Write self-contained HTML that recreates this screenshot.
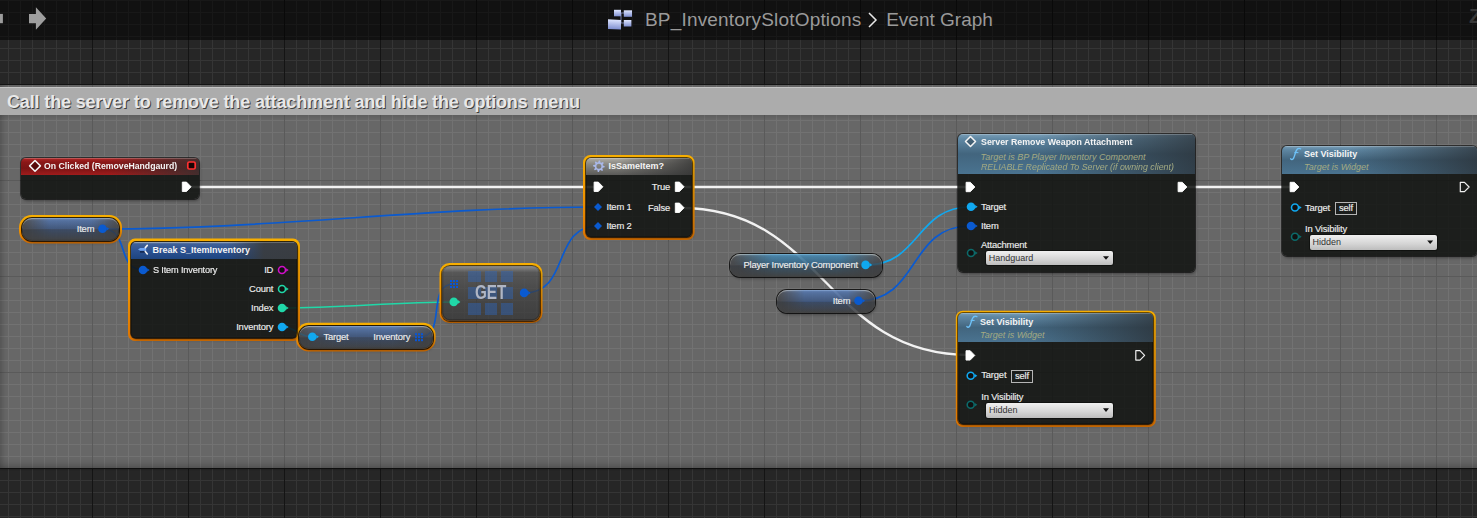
<!DOCTYPE html>
<html><head><meta charset="utf-8"><style>
*{margin:0;padding:0;box-sizing:border-box}
html,body{width:1477px;height:518px;overflow:hidden;background:#262626;font-family:"Liberation Sans",sans-serif}
div,span,svg{position:absolute}
#grid{left:0;top:0;width:1477px;height:518px;
background-image:
linear-gradient(to right,#141414 1px,transparent 1px),
linear-gradient(to bottom,#141414 1px,transparent 1px),
linear-gradient(to right,#353535 1px,transparent 1px),
linear-gradient(to bottom,#353535 1px,transparent 1px);
background-size:96px 518px,1477px 96px,12px 518px,1477px 12px;
background-position:92px 0,0 84px,8px 0,0 0;}
#topbar{left:0;top:0;width:1477px;height:40px;background:rgba(0,0,0,0.55)}
#cbody{left:-1px;top:85px;width:1520px;height:383px;background:rgba(255,255,255,0.3);box-shadow:0 1px 2px rgba(0,0,0,.4),inset 6px 0 6px -3px rgba(0,0,0,.22),inset 0 -8px 8px -6px rgba(0,0,0,.25)}
#cshade{left:0;top:114px;width:1477px;height:6px;background:linear-gradient(to bottom,rgba(0,0,0,.12),rgba(0,0,0,0))}
#chead{left:-20px;top:87.3px;width:1520px;height:27.5px;background:#acacac;box-shadow:inset 0 1px 0 rgba(255,255,255,.3)}
#ctext{left:7px;top:92px;font-size:18px;font-weight:bold;color:#e8e8e8;text-shadow:1px 1px 0 rgba(35,35,35,.8);white-space:nowrap;letter-spacing:-0.14px;line-height:21px}
.title{top:9px;font-size:19px;color:#9a9a9a;white-space:nowrap;line-height:22px}
.t{white-space:nowrap;font-size:9.4px;color:#ededed;line-height:12px;-webkit-text-stroke:0.15px currentColor;letter-spacing:-0.17px}
.b{-webkit-text-stroke:0;font-size:9px;letter-spacing:0}
.b{font-weight:bold;color:#f4f4f4}
.i{font-style:italic;color:#a3aa82;font-size:9px;letter-spacing:0;-webkit-text-stroke:0}
.node{border-radius:5px;background:rgba(17,20,17,0.87);box-shadow:0 0 0 1px rgba(0,0,0,.55),1px 2px 3px rgba(0,0,0,.35);overflow:hidden}
.hdr{left:0;top:0;right:0}
.hdr+.hdr{box-shadow:inset 0 1px 0 rgba(255,255,255,.22)}
.pill{border-radius:11px;box-shadow:inset 0 1px 0 rgba(255,255,245,.38),0 0 0 1px rgba(0,0,0,.75),1px 2px 3px rgba(0,0,0,.3);overflow:hidden;
background:linear-gradient(to bottom,rgba(120,122,126,.85) 0,rgba(74,76,80,.8) 12%,rgba(62,64,68,.8) 49%,rgba(52,56,62,.82) 51%,rgba(60,60,60,.86) 100%)}
.pb{left:0;right:0;top:0;height:50%;background:linear-gradient(to bottom,rgba(95,145,225,.6),rgba(60,105,180,.45));-webkit-mask-image:linear-gradient(to right,transparent 2%,#000 28%,#000 72%,transparent 98%)}
.pb2{left:0;right:0;top:50%;height:50%;background:linear-gradient(to bottom,rgba(55,95,160,.35),rgba(55,95,160,0));-webkit-mask-image:linear-gradient(to right,transparent 5%,#000 30%,#000 70%,transparent 95%)}
.drop{border-radius:2px;background:linear-gradient(to bottom,#f0f0f0,#d4d4d4 60%,#bdbdbd);box-shadow:0 0 0 1px rgba(0,0,0,.4)}
.self{border:1px solid #b5b5b5}
</style></head><body>
<div id="grid"></div>
<div id="topbar"></div>
<div id="cbody"></div><div id="cshade"></div><div id="chead"></div>
<div id="ctext">Call the server to remove the attachment and hide the options menu</div>
<svg style="left:0;top:0" width="60" height="40"><path d="M0 13.9H2.9V23.2H0Z" fill="#9c9c9c"/><path d="M29 13.9H35.9V7.3L46.2 18.5L35.9 29.7V23.2H29Z" fill="#9e9e9e"/></svg>
<svg style="left:604px;top:6px" width="32" height="26"><defs><linearGradient id="bp" x1="0" y1="0" x2="0" y2="1"><stop offset="0" stop-color="#dfe6ff"/><stop offset="1" stop-color="#7f8fd0"/></linearGradient></defs><path d="M13.5 7H20M17 7V17M13.5 17H20" stroke="#8a96c8" stroke-width="0.8" fill="none"/><rect x="10" y="3.8" width="7" height="6.5" fill="url(#bp)"/><rect x="19.8" y="4.3" width="8.2" height="6.5" fill="url(#bp)"/><rect x="4" y="13" width="13" height="9.7" fill="url(#bp)" transform="skewY(3)"/><rect x="19.8" y="14" width="7.6" height="6.5" fill="url(#bp)"/></svg>
<span class="title" style="left:645px;letter-spacing:.18px">BP_InventorySlotOptions</span>
<svg style="left:866px;top:10px" width="14" height="20"><path d="M3 3L10 10L3 17" fill="none" stroke="#e8e8e8" stroke-width="1.5"/></svg>
<span class="title" style="left:886.2px">Event Graph</span>
<span style="left:1469px;top:4px;font-size:21px;font-weight:bold;color:#383838;line-height:24px">Z</span>
<svg style="left:0;top:0" width="1477" height="518"><path d="M187 187 C324.0 187 461.0 187 598 187" fill="none" stroke="#f2f2f2" stroke-width="2.4"/><path d="M680 187 C776.6666666666666 187 873.3333333333334 187 970 187" fill="none" stroke="#f2f2f2" stroke-width="2.4"/><path d="M1182 187 C1219.3333333333333 187 1256.6666666666667 187 1294 187" fill="none" stroke="#f2f2f2" stroke-width="2.4"/><path d="M680 208 C825.6666666666666 208 824.3333333333334 355 970 355" fill="none" stroke="#f2f2f2" stroke-width="2.4"/><path d="M103 229 C275.33333333333337 229 425.66666666666663 207 598 207" fill="none" stroke="#0a5ad0" stroke-width="1.7"/><path d="M103 229 C130.0 229 116.0 270 143 270" fill="none" stroke="#0a5ad0" stroke-width="1.7"/><path d="M283 308 C342.0 308 395.0 302 454 302" fill="none" stroke="#20d8a8" stroke-width="1.7"/><path d="M283 327 C296.0 327 299.0 337 312 337" fill="none" stroke="#10a8f0" stroke-width="1.7"/><path d="M419 337 C448.3333333333333 337 424.6666666666667 284 454 284" fill="none" stroke="#0a5ad0" stroke-width="1.7"/><path d="M524 293 C571.0 293 551.0 226 598 226" fill="none" stroke="#0a5ad0" stroke-width="1.7"/><path d="M866 265 C920.0 265 916.0 207 970 207" fill="none" stroke="#10a8f0" stroke-width="1.7"/><path d="M858 301 C920.3333333333334 301 907.6666666666666 226 970 226" fill="none" stroke="#0a5ad0" stroke-width="1.7"/></svg>
<svg style="left:0;top:0" width="1477" height="518"><defs><linearGradient id="og" x1="0" y1="0" x2="0" y2="1"><stop offset="0" stop-color="#f7ae00"/><stop offset=".5" stop-color="#f09400"/><stop offset="1" stop-color="#df7400"/></linearGradient></defs><rect x="20.4" y="216.4" width="100.2" height="25.7" rx="11.1" fill="none" stroke="url(#og)" stroke-width="2.8"/><rect x="22.3" y="218.3" width="96.4" height="21.9" rx="9.7" fill="none" stroke="rgba(20,10,0,.7)" stroke-width="1"/><rect x="129.4" y="240.0" width="169.2" height="99.60000000000001" rx="5.6" fill="none" stroke="url(#og)" stroke-width="2.8"/><rect x="131.3" y="241.9" width="165.4" height="95.80000000000001" rx="4.2" fill="none" stroke="rgba(20,10,0,.7)" stroke-width="1"/><rect x="297.4" y="324.2" width="136.8" height="25.899999999999988" rx="11.1" fill="none" stroke="url(#og)" stroke-width="2.8"/><rect x="299.3" y="326.1" width="133.00000000000003" height="22.099999999999987" rx="9.7" fill="none" stroke="rgba(20,10,0,.7)" stroke-width="1"/><rect x="440.9" y="264.4" width="100.2" height="57.2" rx="8.6" fill="none" stroke="url(#og)" stroke-width="2.8"/><rect x="442.8" y="266.3" width="96.4" height="53.4" rx="7.2" fill="none" stroke="rgba(20,10,0,.7)" stroke-width="1"/><rect x="584.4" y="156.4" width="108.80000000000003" height="82.2" rx="6.1" fill="none" stroke="url(#og)" stroke-width="2.8"/><rect x="586.3" y="158.3" width="105.00000000000003" height="78.4" rx="4.7" fill="none" stroke="rgba(20,10,0,.7)" stroke-width="1"/><rect x="957.1999999999999" y="312.2" width="197.2" height="113.39999999999999" rx="5.6" fill="none" stroke="url(#og)" stroke-width="2.8"/><rect x="959.0999999999999" y="314.1" width="193.4" height="109.6" rx="4.2" fill="none" stroke="rgba(20,10,0,.7)" stroke-width="1"/></svg>
<div class="node" style="left:21px;top:158px;width:178px;height:41px;border-radius:5px;"><div class="hdr" style="height:17px;background:linear-gradient(to bottom,#b02424 0,#8a1818 25%,#7a1414 60%,#a01c1c 100%)"></div><div class="hdr" style="height:17px;background:linear-gradient(to right,rgba(52,48,48,0) 50%,rgba(52,48,48,.85) 100%)"></div></div>
<div class="pill" style="left:21.6px;top:217.6px;width:97.80000000000001px;height:23.30000000000001px;border-radius:10px;"><div class="pb"></div><div class="pb2"></div></div>
<div class="node" style="left:131px;top:241.8px;width:166px;height:96.39999999999998px;border-radius:5px;"><div class="hdr" style="height:17.5px;background:linear-gradient(to bottom,#7d8fa8 0,#3f6098 12%,#2a5090 55%,#1e4580 100%)"></div><div class="hdr" style="height:17.5px;background:linear-gradient(to right,rgba(58,60,62,0) 58%,rgba(58,60,62,.92) 80%,rgba(58,60,62,.95) 100%)"></div></div>
<div class="pill" style="left:298.6px;top:325.6px;width:134.29999999999995px;height:23.299999999999955px;border-radius:10px;"><div class="pb"></div><div class="pb2"></div></div>
<div class="node" style="left:442px;top:265.5px;width:98px;height:55px;border-radius:8px;background:linear-gradient(to bottom,rgba(150,150,150,.85) 0,rgba(80,80,80,.72) 12%,rgba(58,58,58,.7) 50%,rgba(50,50,50,.76) 100%)"></div>
<div style="left:468.4px;top:270.8px;width:12.2px;height:11.5px;background:rgba(45,105,195,.42);filter:blur(.6px)"></div>
<div style="left:468.4px;top:287px;width:12.2px;height:11.5px;background:rgba(45,105,195,.42);filter:blur(.6px)"></div>
<div style="left:468.4px;top:303.3px;width:12.2px;height:11.5px;background:rgba(45,105,195,.42);filter:blur(.6px)"></div>
<div style="left:484.6px;top:270.8px;width:12.2px;height:11.5px;background:rgba(45,105,195,.42);filter:blur(.6px)"></div>
<div style="left:484.6px;top:287px;width:12.2px;height:11.5px;background:rgba(45,105,195,.42);filter:blur(.6px)"></div>
<div style="left:484.6px;top:303.3px;width:12.2px;height:11.5px;background:rgba(45,105,195,.42);filter:blur(.6px)"></div>
<div style="left:500.9px;top:270.8px;width:12.2px;height:11.5px;background:rgba(45,105,195,.42);filter:blur(.6px)"></div>
<div style="left:500.9px;top:287px;width:12.2px;height:11.5px;background:rgba(45,105,195,.42);filter:blur(.6px)"></div>
<div style="left:500.9px;top:303.3px;width:12.2px;height:11.5px;background:rgba(45,105,195,.42);filter:blur(.6px)"></div>
<div class="node" style="left:585.8px;top:157.8px;width:106.0px;height:79.39999999999998px;border-radius:5px;"><div class="hdr" style="height:17.2px;background:linear-gradient(to bottom,#b0aea6 0,#8a8882 35%,#5a5a58 100%)"></div><div class="hdr" style="height:17.2px;background:linear-gradient(to right,rgba(48,48,48,0) 30%,rgba(48,48,48,.8) 100%)"></div></div>
<div class="pill" style="left:729.6px;top:254px;width:152.89999999999998px;height:22.80000000000001px;border-radius:10px;"><div class="pb" style="background:linear-gradient(to bottom,rgba(70,170,230,.6),rgba(40,130,190,.45))"></div><div class="pb2" style="background:linear-gradient(to bottom,rgba(40,120,170,.35),rgba(40,120,170,0))"></div></div>
<div class="pill" style="left:777.4px;top:290px;width:97.80000000000007px;height:23px;border-radius:10px;"><div class="pb"></div><div class="pb2"></div></div>
<div class="node" style="left:957.5px;top:134px;width:237.0px;height:138.3px;border-radius:5px;"><div class="hdr" style="height:39.5px;background:linear-gradient(to bottom,#7a9eb6 0,#6088a4 12%,#42657e 50%,#4a7390 100%)"></div><div class="hdr" style="height:39.5px;background:linear-gradient(to right,rgba(40,44,48,0) 35%,rgba(40,44,48,.72) 100%)"></div></div>
<div class="node" style="left:1281.8px;top:146px;width:195.5px;height:110px;border-radius:5px;"><div class="hdr" style="height:28px;background:linear-gradient(to bottom,#7a9eb6 0,#6088a4 12%,#42657e 50%,#4a7390 100%)"></div><div class="hdr" style="height:28px;background:linear-gradient(to right,rgba(40,44,48,0) 35%,rgba(40,44,48,.72) 100%)"></div></div>
<div class="node" style="left:958.4px;top:313.4px;width:194.80000000000007px;height:111.0px;border-radius:5px;"><div class="hdr" style="height:29px;background:linear-gradient(to bottom,#7a9eb6 0,#6088a4 12%,#42657e 50%,#4a7390 100%)"></div><div class="hdr" style="height:29px;background:linear-gradient(to right,rgba(40,44,48,0) 35%,rgba(40,44,48,.72) 100%)"></div></div>
<div class="drop" style="left:985.9px;top:250.9px;width:127px;height:14.2px"></div>
<div class="drop" style="left:1309.6px;top:235px;width:127.4px;height:14.7px"></div>
<div class="drop" style="left:985.7px;top:402.9px;width:127.3px;height:15.1px"></div>
<div class="self" style="left:1335px;top:202px;width:22px;height:12.5px"></div>
<div class="self" style="left:1010.8px;top:370.3px;width:22px;height:12.5px"></div>
<svg style="left:0;top:0" width="1477" height="518"><path d="M35 160.5 L40.4 165.9 L35 171.3 L29.6 165.9Z" fill="rgba(60,0,0,.6)" stroke="#f4f4f4" stroke-width="1.5" stroke-linejoin="round"/><rect x="187.8" y="162" width="7.4" height="7" rx="1.4" fill="#1a0505" stroke="#ff3030" stroke-width="1.7"/><path d="M138 249.4L140.2 248H146.2V250.8H140.2Z" fill="#6fa4f2"/><path d="M140 251.9H145.5" stroke="#0a1530" stroke-width="1.1"/><path d="M145.3 247.6L147.3 245.4M145.3 251.4L147.3 253.9" stroke="#f2f2f2" stroke-width="1.6" stroke-linecap="round"/><path d="M598.90 160.40 L600.03 160.51 L600.47 162.41 L601.18 162.79 L603.00 162.10 L603.72 162.98 L602.69 164.63 L602.92 165.40 L604.70 166.20 L604.59 167.33 L602.69 167.77 L602.31 168.48 L603.00 170.30 L602.12 171.02 L600.47 169.99 L599.70 170.22 L598.90 172.00 L597.77 171.89 L597.33 169.99 L596.62 169.61 L594.80 170.30 L594.08 169.42 L595.11 167.77 L594.88 167.00 L593.10 166.20 L593.21 165.07 L595.11 164.63 L595.49 163.92 L594.80 162.10 L595.68 161.38 L597.33 162.41 L598.10 162.18Z M601.4 166.2 A2.5 2.5 0 1 0 596.4 166.2 A2.5 2.5 0 1 0 601.4 166.2Z" fill="#a9b8e8" fill-rule="evenodd"/><path d="M970.5 136.5 L975.5 141.5 L970.5 146.5 L965.5 141.5Z" fill="rgba(0,0,0,.25)" stroke="#f4f4f4" stroke-width="1.5" stroke-linejoin="round"/><g transform="translate(323.8 -167.8)"><path d="M966.9 326.6C967.6 327.6 968.9 327.6 969.7 326.2C970.6 324.4 971.6 320.2 972.6 318.2C973.5 316.3 975.2 315.8 976.9 316.6" fill="none" stroke="#6ec2f8" stroke-width="1.4" stroke-linecap="round"/><path d="M970.6 320.4H974.6" stroke="#6ec2f8" stroke-width="1.1"/></g><g transform="translate(0 0)"><path d="M966.9 326.6C967.6 327.6 968.9 327.6 969.7 326.2C970.6 324.4 971.6 320.2 972.6 318.2C973.5 316.3 975.2 315.8 976.9 316.6" fill="none" stroke="#6ec2f8" stroke-width="1.4" stroke-linecap="round"/><path d="M970.6 320.4H974.6" stroke="#6ec2f8" stroke-width="1.1"/></g><path d="M182.29999999999998 182.10000000000002 H186.5 L191.1 186.8 L186.5 191.5 H182.29999999999998Z" fill="#fff" stroke="#fff" stroke-width="0.9" stroke-linejoin="round"/><circle cx="102.5" cy="228.8" r="4.3" fill="#0a5ad0"/><path d="M106.6 227.0 L109.1 228.8 L106.6 230.60000000000002Z" fill="#0a5ad0"/><circle cx="143" cy="270" r="4.3" fill="#0a5ad0"/><path d="M147.10000000000002 268.2 L149.60000000000002 270 L147.10000000000002 271.8Z" fill="#0a5ad0"/><circle cx="282" cy="270" r="3.5" fill="#111" stroke="#d010c8" stroke-width="1.6"/><path d="M286.1 268.2 L288.6 270 L286.1 271.8Z" fill="#d010c8"/><circle cx="282" cy="289" r="3.5" fill="#111" stroke="#20d8a8" stroke-width="1.6"/><path d="M286.1 287.2 L288.6 289 L286.1 290.8Z" fill="#20d8a8"/><circle cx="282" cy="308" r="4.3" fill="#20d8a8"/><path d="M286.1 306.2 L288.6 308 L286.1 309.8Z" fill="#20d8a8"/><circle cx="282" cy="327" r="4.3" fill="#10a8f0"/><path d="M286.1 325.2 L288.6 327 L286.1 328.8Z" fill="#10a8f0"/><circle cx="312.3" cy="336.8" r="4.3" fill="#10a8f0"/><path d="M316.40000000000003 335.0 L318.90000000000003 336.8 L316.40000000000003 338.6Z" fill="#10a8f0"/><rect x="415" y="333.2" width="2" height="2" fill="#0856d8"/><rect x="415" y="336.2" width="2" height="2" fill="#0856d8"/><rect x="415" y="339.2" width="2" height="2" fill="#0856d8"/><rect x="418" y="333.2" width="2" height="2" fill="#0856d8"/><rect x="418" y="336.2" width="2" height="2" fill="#0856d8"/><rect x="418" y="339.2" width="2" height="2" fill="#0856d8"/><rect x="421" y="333.2" width="2" height="2" fill="#0856d8"/><rect x="421" y="336.2" width="2" height="2" fill="#0856d8"/><rect x="421" y="339.2" width="2" height="2" fill="#0856d8"/><rect x="450" y="280" width="2" height="2" fill="#0856d8"/><rect x="450" y="283" width="2" height="2" fill="#0856d8"/><rect x="450" y="286" width="2" height="2" fill="#0856d8"/><rect x="453" y="280" width="2" height="2" fill="#0856d8"/><rect x="453" y="283" width="2" height="2" fill="#0856d8"/><rect x="453" y="286" width="2" height="2" fill="#0856d8"/><rect x="456" y="280" width="2" height="2" fill="#0856d8"/><rect x="456" y="283" width="2" height="2" fill="#0856d8"/><rect x="456" y="286" width="2" height="2" fill="#0856d8"/><circle cx="453.8" cy="301.9" r="4.3" fill="#20d8a8"/><path d="M457.90000000000003 300.09999999999997 L460.40000000000003 301.9 L457.90000000000003 303.7Z" fill="#20d8a8"/><circle cx="524.1" cy="292.9" r="4.3" fill="#0a5ad0"/><path d="M528.1999999999999 291.09999999999997 L530.6999999999999 292.9 L528.1999999999999 294.7Z" fill="#0a5ad0"/><path d="M594.1 182.10000000000002 H598.3 L602.9 186.8 L598.3 191.5 H594.1Z" fill="#fff" stroke="#fff" stroke-width="0.9" stroke-linejoin="round"/><path d="M675.3000000000001 182.10000000000002 H679.5 L684.1 186.8 L679.5 191.5 H675.3000000000001Z" fill="#fff" stroke="#fff" stroke-width="0.9" stroke-linejoin="round"/><path d="M675.3000000000001 203.10000000000002 H679.5 L684.1 207.8 L679.5 212.5 H675.3000000000001Z" fill="#fff" stroke="#fff" stroke-width="0.9" stroke-linejoin="round"/><path d="M598 203 L602 207 L598 211 L594 207Z" fill="#0a5ad0"/><path d="M598 222 L602 226 L598 230 L594 226Z" fill="#0a5ad0"/><circle cx="865.6" cy="264.9" r="4.3" fill="#10a8f0"/><path d="M869.6999999999999 263.09999999999997 L872.1999999999999 264.9 L869.6999999999999 266.7Z" fill="#10a8f0"/><circle cx="858.5" cy="300.8" r="4.3" fill="#0a5ad0"/><path d="M862.5999999999999 299.0 L865.0999999999999 300.8 L862.5999999999999 302.6Z" fill="#0a5ad0"/><path d="M966.1 182.3 H970.3 L974.9 187 L970.3 191.7 H966.1Z" fill="#fff" stroke="#fff" stroke-width="0.9" stroke-linejoin="round"/><path d="M1178.1 182.3 H1182.3 L1186.9 187 L1182.3 191.7 H1178.1Z" fill="#fff" stroke="#fff" stroke-width="0.9" stroke-linejoin="round"/><circle cx="971" cy="206.7" r="4.3" fill="#10a8f0"/><path d="M975.0999999999999 204.89999999999998 L977.5999999999999 206.7 L975.0999999999999 208.5Z" fill="#10a8f0"/><circle cx="971" cy="226" r="4.3" fill="#0a5ad0"/><path d="M975.0999999999999 224.2 L977.5999999999999 226 L975.0999999999999 227.8Z" fill="#0a5ad0"/><circle cx="971" cy="253" r="3.5" fill="#111" stroke="#0c6a6a" stroke-width="1.6"/><path d="M975.0999999999999 251.2 L977.5999999999999 253 L975.0999999999999 254.8Z" fill="#0c6a6a"/><path d="M1290.1 182.3 H1294.3 L1298.9 187 L1294.3 191.7 H1290.1Z" fill="#fff" stroke="#fff" stroke-width="0.9" stroke-linejoin="round"/><path d="M1460.3 182.3 H1464.5 L1469.1000000000001 187 L1464.5 191.7 H1460.3Z" fill="none" stroke="#eee" stroke-width="1.2" stroke-linejoin="round"/><circle cx="1295" cy="207.5" r="3.5" fill="#111" stroke="#10a8f0" stroke-width="1.6"/><path d="M1299.1 205.7 L1301.6 207.5 L1299.1 209.3Z" fill="#10a8f0"/><circle cx="1295" cy="236.7" r="3.5" fill="#111" stroke="#0c6a6a" stroke-width="1.6"/><path d="M1299.1 234.89999999999998 L1301.6 236.7 L1299.1 238.5Z" fill="#0c6a6a"/><path d="M966.0 350.7 H970.1999999999999 L974.8 355.4 L970.1999999999999 360.09999999999997 H966.0Z" fill="#fff" stroke="#fff" stroke-width="0.9" stroke-linejoin="round"/><path d="M1135.8 350.7 H1140.0 L1144.6000000000001 355.4 L1140.0 360.09999999999997 H1135.8Z" fill="none" stroke="#eee" stroke-width="1.2" stroke-linejoin="round"/><circle cx="970.7" cy="375.7" r="3.5" fill="#111" stroke="#10a8f0" stroke-width="1.6"/><path d="M974.8 373.9 L977.3 375.7 L974.8 377.5Z" fill="#10a8f0"/><circle cx="970.7" cy="404.8" r="3.5" fill="#111" stroke="#0c6a6a" stroke-width="1.6"/><path d="M974.8 403.0 L977.3 404.8 L974.8 406.6Z" fill="#0c6a6a"/><path d="M1103 256.2 H1109 L1106 259.8Z" fill="#111"/><path d="M1427.2 240.5 H1433.2 L1430.2 244.1Z" fill="#111"/><path d="M1103 408.3 H1109 L1106 411.90000000000003Z" fill="#111"/></svg>
<span class="t b" style="top:160px;left:44px;transform:scaleX(0.965);transform-origin:left center;">On Clicked (RemoveHandgaurd)</span>
<span class="t" style="top:223px;right:1382.7px;">Item</span>
<span class="t b" style="top:243.7px;left:152.4px;">Break S_ItemInventory</span>
<span class="t" style="top:264px;left:153px;transform:scaleX(0.98);transform-origin:left center;">S Item Inventory</span>
<span class="t" style="top:264px;right:1203.8px;">ID</span>
<span class="t" style="top:283px;right:1203.8px;">Count</span>
<span class="t" style="top:302px;right:1203.8px;">Index</span>
<span class="t" style="top:321px;right:1203.8px;">Inventory</span>
<span class="t" style="top:331px;left:323.5px;">Target</span>
<span class="t" style="top:331px;right:1066.7px;">Inventory</span>
<span style="left:475px;top:281px;font-size:19.5px;font-weight:bold;color:#b0b6c4;white-space:nowrap;transform:scaleX(0.78);transform-origin:left top;line-height:22px">GET</span>
<span class="t b" style="top:160px;left:608.5px;">IsSameItem?</span>
<span class="t" style="top:181px;right:807px;">True</span>
<span class="t" style="top:202px;right:807px;">False</span>
<span class="t" style="top:201px;left:606.5px;">Item 1</span>
<span class="t" style="top:220px;left:606.5px;">Item 2</span>
<span class="t" style="top:259px;left:743.5px;">Player Inventory Component</span>
<span class="t" style="top:295px;right:626.7px;">Item</span>
<span class="t b" style="top:135.5px;left:980.5px;transform:scaleX(0.98);transform-origin:left center;">Server Remove Weapon Attachment</span>
<span class="t i" style="top:150.5px;left:980.5px;">Target is BP Player Inventory Component</span>
<span class="t i" style="top:160.5px;left:980.5px;transform:scaleX(0.98);transform-origin:left center;">RELIABLE Replicated To Server (if owning client)</span>
<span class="t" style="top:201px;left:981px;">Target</span>
<span class="t" style="top:220px;left:981px;">Item</span>
<span class="t" style="top:239px;left:981px;">Attachment</span>
<span class="t" style="top:252px;left:988.7px;color:#333;-webkit-text-stroke:0;font-size:9px;letter-spacing:0">Handguard</span>
<span class="t b" style="top:148px;left:1304px;">Set Visibility</span>
<span class="t i" style="top:161px;left:1304px;">Target is Widget</span>
<span class="t" style="top:202px;left:1305px;">Target</span>
<span class="t" style="top:202px;left:1339px;">self</span>
<span class="t" style="top:222.5px;left:1305px;">In Visibility</span>
<span class="t" style="top:236px;left:1312.5px;color:#333;-webkit-text-stroke:0;font-size:9px;letter-spacing:0">Hidden</span>
<span class="t b" style="top:315.6px;left:980px;">Set Visibility</span>
<span class="t i" style="top:328.6px;left:980px;">Target is Widget</span>
<span class="t" style="top:369px;left:981.3px;">Target</span>
<span class="t" style="top:370px;left:1015px;">self</span>
<span class="t" style="top:390.5px;left:981.3px;">In Visibility</span>
<span class="t" style="top:404.2px;left:988.9px;color:#333;-webkit-text-stroke:0;font-size:9px;letter-spacing:0">Hidden</span>
</body></html>
